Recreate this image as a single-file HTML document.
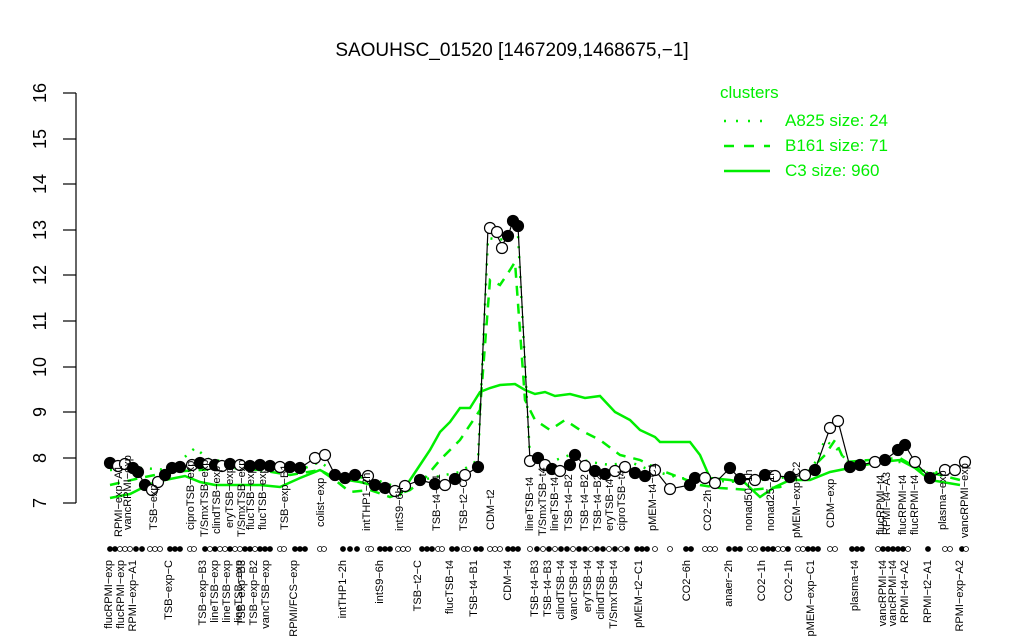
<!DOCTYPE html>
<html><head><meta charset="utf-8"><style>
html,body{margin:0;padding:0;background:#fff;}
svg{display:block;font-family:"Liberation Sans",sans-serif;}
</style></head><body>
<svg width="1024" height="640" viewBox="0 0 1024 640" xmlns="http://www.w3.org/2000/svg">
<rect width="1024" height="640" fill="#fff"/>
<text x="512" y="56" font-size="19" text-anchor="middle">SAOUHSC_01520 [1467209,1468675,−1]</text>
<g stroke="#000" stroke-width="1.2">
<line x1="76" y1="93" x2="76" y2="503"/>
<line x1="63" y1="93" x2="76" y2="93"/><line x1="63" y1="139" x2="76" y2="139"/><line x1="63" y1="184" x2="76" y2="184"/><line x1="63" y1="230" x2="76" y2="230"/><line x1="63" y1="275" x2="76" y2="275"/><line x1="63" y1="321" x2="76" y2="321"/><line x1="63" y1="367" x2="76" y2="367"/><line x1="63" y1="412" x2="76" y2="412"/><line x1="63" y1="458" x2="76" y2="458"/><line x1="63" y1="503" x2="76" y2="503"/>
</g>
<g font-size="18" text-anchor="middle">
<text transform="translate(46,93) rotate(-90)">16</text><text transform="translate(46,139) rotate(-90)">15</text><text transform="translate(46,184) rotate(-90)">14</text><text transform="translate(46,230) rotate(-90)">13</text><text transform="translate(46,275) rotate(-90)">12</text><text transform="translate(46,321) rotate(-90)">11</text><text transform="translate(46,367) rotate(-90)">10</text><text transform="translate(46,412) rotate(-90)">9</text><text transform="translate(46,458) rotate(-90)">8</text><text transform="translate(46,503) rotate(-90)">7</text>
</g>
<g fill="#00ee00" font-size="17">
<text x="720" y="98">clusters</text>
<text x="785" y="126">A825 size: 24</text>
<text x="785" y="151">B161 size: 71</text>
<text x="785" y="176">C3 size: 960</text>
</g>
<g stroke="#00ee00" stroke-width="2.5">
<line x1="724" y1="121" x2="770" y2="121" stroke-dasharray="2,10"/>
<line x1="724" y1="146" x2="770" y2="146" stroke-dasharray="10,10"/>
<line x1="724" y1="171" x2="770" y2="171"/>
</g>
<polyline fill="none" stroke="#00ee00" stroke-width="2.5" points="110,498 130,494 150,484 165,480 185,476 200,482 215,485 240,485 260,485 280,487 300,478 320,470 335,478 360,482 380,487 400,495 410,480 420,465 430,450 440,432 450,422 460,408 470,408 480,392 490,388 500,385 515,384 525,390 535,394 545,392 555,396 570,394 585,398 600,396 615,412 630,420 640,430 655,437 660,442 670,442 690,442 700,455 710,478 730,480 745,483 760,497 775,487 790,480 810,480 830,472 850,468 880,462 900,460 915,468 930,480 960,485"/>
<polyline fill="none" stroke="#00ee00" stroke-width="2.5" stroke-dasharray="10,8" points="110,485 140,478 170,472 200,470 230,468 260,470 290,475 320,470 335,480 350,492 370,490 390,497 410,490 425,478 440,460 460,440 480,410 490,280 500,285 510,270 515,262 525,400 535,420 550,430 565,420 580,430 600,440 620,455 640,460 660,470 700,485 720,488 750,490 780,487 810,470 825,455 835,440 845,462 870,460 900,458 920,470 960,480"/>
<polyline fill="none" stroke="#00ee00" stroke-width="2.5" stroke-dasharray="2,8" points="110,470 140,468 170,470 195,448 210,460 240,462 270,462 300,470 320,462 340,476 370,478 400,488 430,478 460,472 478,460 488,238 500,240 510,235 518,235 530,458 550,462 570,455 590,462 610,465 630,462 650,470 680,478 700,480 740,482 780,478 810,474 825,440 838,450 850,465 880,462 905,462 930,474 960,466"/>
<polyline fill="none" stroke="#000" stroke-width="1.2" points="110,463 118,466 125,464 133,468 138,472 145,485 152,490 158,482 165,475 172,468 180,467 192,465 200,463 208,464 215,465 222,466 230,464 240,465 250,466 260,465 270,466 280,467 290,467 300,468 315,458 325,455 335,475 345,478 355,475 368,476 375,485 385,488 395,491 405,486 420,480 435,484 445,485 455,479 465,475 478,467 488,228 495,232 502,245 508,236 513,221 518,226 530,461 538,458 545,465 552,469 560,471 570,465 575,455 585,466 595,471 605,474 615,471 625,467 635,473 645,476 655,470 670,489 690,485 695,478 705,478 715,483 730,468 740,479 755,480 765,475 775,476 790,477 805,475 815,470 830,428 838,421 850,467 860,465 875,462 885,460 898,450 905,445 915,462 930,478 945,470 955,470 965,462"/>
<g stroke="#000" stroke-width="1.2" fill="#000">
<circle cx="110" cy="463" r="5.5"/><circle cx="118" cy="466" r="5.5" fill="#fff"/><circle cx="125" cy="464" r="5.5" fill="#fff"/><circle cx="133" cy="468" r="5.5"/><circle cx="138" cy="472" r="5.5"/><circle cx="145" cy="485" r="5.5"/><circle cx="152" cy="490" r="5.5" fill="#fff"/><circle cx="158" cy="482" r="5.5" fill="#fff"/><circle cx="165" cy="475" r="5.5"/><circle cx="172" cy="468" r="5.5"/><circle cx="180" cy="467" r="5.5"/><circle cx="192" cy="465" r="5.5" fill="#fff"/><circle cx="200" cy="463" r="5.5"/><circle cx="208" cy="464" r="5.5" fill="#fff"/><circle cx="215" cy="465" r="5.5"/><circle cx="222" cy="466" r="5.5" fill="#fff"/><circle cx="230" cy="464" r="5.5"/><circle cx="240" cy="465" r="5.5" fill="#fff"/><circle cx="250" cy="466" r="5.5"/><circle cx="260" cy="465" r="5.5"/><circle cx="270" cy="466" r="5.5"/><circle cx="280" cy="467" r="5.5" fill="#fff"/><circle cx="290" cy="467" r="5.5"/><circle cx="300" cy="468" r="5.5"/><circle cx="315" cy="458" r="5.5" fill="#fff"/><circle cx="325" cy="455" r="5.5" fill="#fff"/><circle cx="335" cy="475" r="5.5"/><circle cx="345" cy="478" r="5.5"/><circle cx="355" cy="475" r="5.5"/><circle cx="368" cy="476" r="5.5" fill="#fff"/><circle cx="375" cy="485" r="5.5"/><circle cx="385" cy="488" r="5.5"/><circle cx="395" cy="491" r="5.5" fill="#fff"/><circle cx="405" cy="486" r="5.5" fill="#fff"/><circle cx="420" cy="480" r="5.5"/><circle cx="435" cy="484" r="5.5"/><circle cx="445" cy="485" r="5.5" fill="#fff"/><circle cx="455" cy="479" r="5.5"/><circle cx="465" cy="475" r="5.5" fill="#fff"/><circle cx="478" cy="467" r="5.5"/><circle cx="490" cy="228" r="5.5" fill="#fff"/><circle cx="497" cy="232" r="5.5" fill="#fff"/><circle cx="502" cy="248" r="5.5" fill="#fff"/><circle cx="508" cy="236" r="5.5"/><circle cx="513" cy="221" r="5.5"/><circle cx="518" cy="226" r="5.5"/><circle cx="530" cy="461" r="5.5" fill="#fff"/><circle cx="538" cy="458" r="5.5"/><circle cx="545" cy="465" r="5.5" fill="#fff"/><circle cx="552" cy="469" r="5.5"/><circle cx="560" cy="471" r="5.5" fill="#fff"/><circle cx="570" cy="465" r="5.5"/><circle cx="575" cy="455" r="5.5"/><circle cx="585" cy="466" r="5.5" fill="#fff"/><circle cx="595" cy="471" r="5.5"/><circle cx="605" cy="474" r="5.5"/><circle cx="615" cy="471" r="5.5" fill="#fff"/><circle cx="625" cy="467" r="5.5" fill="#fff"/><circle cx="635" cy="473" r="5.5"/><circle cx="645" cy="476" r="5.5"/><circle cx="655" cy="470" r="5.5" fill="#fff"/><circle cx="670" cy="489" r="5.5" fill="#fff"/><circle cx="690" cy="485" r="5.5"/><circle cx="695" cy="478" r="5.5"/><circle cx="705" cy="478" r="5.5" fill="#fff"/><circle cx="715" cy="483" r="5.5" fill="#fff"/><circle cx="730" cy="468" r="5.5"/><circle cx="740" cy="479" r="5.5"/><circle cx="755" cy="480" r="5.5" fill="#fff"/><circle cx="765" cy="475" r="5.5"/><circle cx="775" cy="476" r="5.5" fill="#fff"/><circle cx="790" cy="477" r="5.5"/><circle cx="805" cy="475" r="5.5" fill="#fff"/><circle cx="815" cy="470" r="5.5"/><circle cx="830" cy="428" r="5.5" fill="#fff"/><circle cx="838" cy="421" r="5.5" fill="#fff"/><circle cx="850" cy="467" r="5.5"/><circle cx="860" cy="465" r="5.5"/><circle cx="875" cy="462" r="5.5" fill="#fff"/><circle cx="885" cy="460" r="5.5"/><circle cx="898" cy="450" r="5.5"/><circle cx="905" cy="445" r="5.5"/><circle cx="915" cy="462" r="5.5" fill="#fff"/><circle cx="930" cy="478" r="5.5"/><circle cx="945" cy="470" r="5.5" fill="#fff"/><circle cx="955" cy="470" r="5.5" fill="#fff"/><circle cx="965" cy="462" r="5.5" fill="#fff"/>
</g>
<g stroke="#000" stroke-width="0.8" fill="#000">
<circle cx="110" cy="549" r="2.5"/><circle cx="115" cy="549" r="2.5"/><circle cx="120" cy="549" r="2.5" fill="#fff"/><circle cx="125" cy="549" r="2.5" fill="#fff"/><circle cx="130" cy="549" r="2.5" fill="#fff"/><circle cx="136" cy="549" r="2.5"/><circle cx="142" cy="549" r="2.5"/><circle cx="150" cy="549" r="2.5" fill="#fff"/><circle cx="155" cy="549" r="2.5" fill="#fff"/><circle cx="160" cy="549" r="2.5" fill="#fff"/><circle cx="170" cy="549" r="2.5"/><circle cx="175" cy="549" r="2.5"/><circle cx="180" cy="549" r="2.5"/><circle cx="190" cy="549" r="2.5" fill="#fff"/><circle cx="194" cy="549" r="2.5" fill="#fff"/><circle cx="205" cy="549" r="2.5"/><circle cx="210" cy="549" r="2.5" fill="#fff"/><circle cx="215" cy="549" r="2.5"/><circle cx="220" cy="549" r="2.5" fill="#fff"/><circle cx="225" cy="549" r="2.5" fill="#fff"/><circle cx="230" cy="549" r="2.5"/><circle cx="235" cy="549" r="2.5" fill="#fff"/><circle cx="240" cy="549" r="2.5" fill="#fff"/><circle cx="245" cy="549" r="2.5"/><circle cx="250" cy="549" r="2.5"/><circle cx="255" cy="549" r="2.5" fill="#fff"/><circle cx="260" cy="549" r="2.5"/><circle cx="265" cy="549" r="2.5"/><circle cx="270" cy="549" r="2.5"/><circle cx="280" cy="549" r="2.5" fill="#fff"/><circle cx="284" cy="549" r="2.5" fill="#fff"/><circle cx="295" cy="549" r="2.5"/><circle cx="300" cy="549" r="2.5"/><circle cx="305" cy="549" r="2.5"/><circle cx="320" cy="549" r="2.5" fill="#fff"/><circle cx="324" cy="549" r="2.5" fill="#fff"/><circle cx="343" cy="549" r="2.5"/><circle cx="350" cy="549" r="2.5"/><circle cx="357" cy="549" r="2.5"/><circle cx="368" cy="549" r="2.5" fill="#fff"/><circle cx="371" cy="549" r="2.5" fill="#fff"/><circle cx="380" cy="549" r="2.5"/><circle cx="385" cy="549" r="2.5"/><circle cx="390" cy="549" r="2.5"/><circle cx="398" cy="549" r="2.5" fill="#fff"/><circle cx="403" cy="549" r="2.5" fill="#fff"/><circle cx="408" cy="549" r="2.5" fill="#fff"/><circle cx="422" cy="549" r="2.5"/><circle cx="427" cy="549" r="2.5"/><circle cx="432" cy="549" r="2.5"/><circle cx="438" cy="549" r="2.5" fill="#fff"/><circle cx="442" cy="549" r="2.5" fill="#fff"/><circle cx="452" cy="549" r="2.5"/><circle cx="457" cy="549" r="2.5"/><circle cx="464" cy="549" r="2.5" fill="#fff"/><circle cx="468" cy="549" r="2.5" fill="#fff"/><circle cx="476" cy="549" r="2.5"/><circle cx="481" cy="549" r="2.5"/><circle cx="490" cy="549" r="2.5" fill="#fff"/><circle cx="495" cy="549" r="2.5" fill="#fff"/><circle cx="500" cy="549" r="2.5" fill="#fff"/><circle cx="508" cy="549" r="2.5"/><circle cx="513" cy="549" r="2.5"/><circle cx="518" cy="549" r="2.5"/><circle cx="530" cy="549" r="2.5" fill="#fff"/><circle cx="537" cy="549" r="2.5"/><circle cx="543" cy="549" r="2.5" fill="#fff"/><circle cx="549" cy="549" r="2.5"/><circle cx="555" cy="549" r="2.5" fill="#fff"/><circle cx="561" cy="549" r="2.5"/><circle cx="567" cy="549" r="2.5"/><circle cx="573" cy="549" r="2.5" fill="#fff"/><circle cx="579" cy="549" r="2.5"/><circle cx="585" cy="549" r="2.5"/><circle cx="591" cy="549" r="2.5" fill="#fff"/><circle cx="597" cy="549" r="2.5"/><circle cx="603" cy="549" r="2.5"/><circle cx="609" cy="549" r="2.5" fill="#fff"/><circle cx="615" cy="549" r="2.5"/><circle cx="621" cy="549" r="2.5" fill="#fff"/><circle cx="627" cy="549" r="2.5"/><circle cx="637" cy="549" r="2.5"/><circle cx="642" cy="549" r="2.5"/><circle cx="647" cy="549" r="2.5"/><circle cx="655" cy="549" r="2.5" fill="#fff"/><circle cx="670" cy="549" r="2.5" fill="#fff"/><circle cx="686" cy="549" r="2.5"/><circle cx="691" cy="549" r="2.5"/><circle cx="705" cy="549" r="2.5" fill="#fff"/><circle cx="710" cy="549" r="2.5" fill="#fff"/><circle cx="715" cy="549" r="2.5" fill="#fff"/><circle cx="729" cy="549" r="2.5"/><circle cx="735" cy="549" r="2.5"/><circle cx="740" cy="549" r="2.5"/><circle cx="750" cy="549" r="2.5" fill="#fff"/><circle cx="755" cy="549" r="2.5" fill="#fff"/><circle cx="763" cy="549" r="2.5"/><circle cx="768" cy="549" r="2.5"/><circle cx="773" cy="549" r="2.5"/><circle cx="778" cy="549" r="2.5" fill="#fff"/><circle cx="783" cy="549" r="2.5" fill="#fff"/><circle cx="788" cy="549" r="2.5"/><circle cx="798" cy="549" r="2.5" fill="#fff"/><circle cx="803" cy="549" r="2.5" fill="#fff"/><circle cx="808" cy="549" r="2.5"/><circle cx="813" cy="549" r="2.5"/><circle cx="818" cy="549" r="2.5"/><circle cx="830" cy="549" r="2.5" fill="#fff"/><circle cx="835" cy="549" r="2.5" fill="#fff"/><circle cx="852" cy="549" r="2.5"/><circle cx="857" cy="549" r="2.5"/><circle cx="862" cy="549" r="2.5"/><circle cx="878" cy="549" r="2.5" fill="#fff"/><circle cx="883" cy="549" r="2.5"/><circle cx="888" cy="549" r="2.5"/><circle cx="893" cy="549" r="2.5"/><circle cx="898" cy="549" r="2.5"/><circle cx="903" cy="549" r="2.5"/><circle cx="908" cy="549" r="2.5" fill="#fff"/><circle cx="928" cy="549" r="2.5"/><circle cx="945" cy="549" r="2.5" fill="#fff"/><circle cx="950" cy="549" r="2.5" fill="#fff"/><circle cx="962" cy="549" r="2.5"/><circle cx="966" cy="549" r="2.5" fill="#fff"/>
</g>
<g font-size="11" text-anchor="start">
<text transform="translate(122,537) rotate(-90)">RPMI−exp−A1</text>
<text transform="translate(131,530) rotate(-90)">vancRPMI−exp</text>
<text transform="translate(157,530) rotate(-90)">TSB−exp</text>
<text transform="translate(194,530) rotate(-90)">ciproTSB−exp</text>
<text transform="translate(208,537) rotate(-90)">T/SmxTSB−exp</text>
<text transform="translate(220,534) rotate(-90)">clindTSB−exp</text>
<text transform="translate(233,528) rotate(-90)">eryTSB−exp</text>
<text transform="translate(245,537) rotate(-90)">T/SmxTSB−exp</text>
<text transform="translate(254,530) rotate(-90)">flucTSB−exp</text>
<text transform="translate(266,530) rotate(-90)">flucTSB−exp</text>
<text transform="translate(288,530) rotate(-90)">TSB−exp−B1</text>
<text transform="translate(324,527) rotate(-90)">colist−exp</text>
<text transform="translate(370,531) rotate(-90)">intTHP1−2h</text>
<text transform="translate(403,531) rotate(-90)">intS9−6h</text>
<text transform="translate(440,531) rotate(-90)">TSB−t4−B1</text>
<text transform="translate(467,531) rotate(-90)">TSB−t2−C</text>
<text transform="translate(494,530) rotate(-90)">CDM−t2</text>
<text transform="translate(533,531) rotate(-90)">lineTSB−t4</text>
<text transform="translate(546,536) rotate(-90)">T/SmxTSB−t4</text>
<text transform="translate(558,531) rotate(-90)">lineTSB−t4</text>
<text transform="translate(572,531) rotate(-90)">TSB−t4−B2</text>
<text transform="translate(588,531) rotate(-90)">TSB−t4−B2</text>
<text transform="translate(601,531) rotate(-90)">TSB−t4−B2</text>
<text transform="translate(613,531) rotate(-90)">eryTSB−t4</text>
<text transform="translate(625,531) rotate(-90)">ciproTSB−t4</text>
<text transform="translate(656,531) rotate(-90)">pMEM−t4−C1</text>
<text transform="translate(711,531) rotate(-90)">CO2−2h</text>
<text transform="translate(752,531) rotate(-90)">nonad50−1h</text>
<text transform="translate(774,531) rotate(-90)">nonad25−1h</text>
<text transform="translate(800,538) rotate(-90)">pMEM−exp−C2</text>
<text transform="translate(834,528) rotate(-90)">CDM−exp</text>
<text transform="translate(884,535) rotate(-90)">flucRPMI−t4</text>
<text transform="translate(890,535) rotate(-90)">RPMI−t4−A3</text>
<text transform="translate(906,535) rotate(-90)">flucRPMI−t4</text>
<text transform="translate(918,535) rotate(-90)">flucRPMI−t4</text>
<text transform="translate(946,530) rotate(-90)">plasma−exp</text>
<text transform="translate(968,538) rotate(-90)">vancRPMI−exp</text>
</g>
<g font-size="11" text-anchor="end">
<text transform="translate(112,560) rotate(-90)">flucRPMI−exp</text>
<text transform="translate(124,560) rotate(-90)">flucRPMI−exp</text>
<text transform="translate(136,560) rotate(-90)">RPMI−exp−A1</text>
<text transform="translate(172,560) rotate(-90)">TSB−exp−C</text>
<text transform="translate(206,560) rotate(-90)">TSB−exp−B3</text>
<text transform="translate(218,560) rotate(-90)">lineTSB−exp</text>
<text transform="translate(230,560) rotate(-90)">lineTSB−exp</text>
<text transform="translate(242,560) rotate(-90)">lineTSB−exp</text>
<text transform="translate(245,560) rotate(-90)">TSB−exp−B3</text>
<text transform="translate(257,560) rotate(-90)">TSB−exp−B2</text>
<text transform="translate(269,560) rotate(-90)">vancTSB−exp</text>
<text transform="translate(297,560) rotate(-90)">RPMI/FCS−exp</text>
<text transform="translate(346,560) rotate(-90)">intTHP1−2h</text>
<text transform="translate(383,560) rotate(-90)">intS9−6h</text>
<text transform="translate(421,560) rotate(-90)">TSB−t2−C</text>
<text transform="translate(453,560) rotate(-90)">flucTSB−t4</text>
<text transform="translate(477,560) rotate(-90)">TSB−t4−B1</text>
<text transform="translate(511,560) rotate(-90)">CDM−t4</text>
<text transform="translate(538,560) rotate(-90)">TSB−t4−B3</text>
<text transform="translate(551,560) rotate(-90)">TSB−t4−B3</text>
<text transform="translate(564,560) rotate(-90)">clindTSB−t4</text>
<text transform="translate(577,560) rotate(-90)">vancTSB−t4</text>
<text transform="translate(591,560) rotate(-90)">eryTSB−t4</text>
<text transform="translate(604,560) rotate(-90)">clindTSB−t4</text>
<text transform="translate(617,560) rotate(-90)">T/SmxTSB−t4</text>
<text transform="translate(642,560) rotate(-90)">pMEM−t2−C1</text>
<text transform="translate(690,560) rotate(-90)">CO2−6h</text>
<text transform="translate(732,560) rotate(-90)">anaer−2h</text>
<text transform="translate(765,560) rotate(-90)">CO2−1h</text>
<text transform="translate(792,560) rotate(-90)">CO2−1h</text>
<text transform="translate(814,560) rotate(-90)">pMEM−exp−C1</text>
<text transform="translate(858,560) rotate(-90)">plasma−t4</text>
<text transform="translate(886,560) rotate(-90)">vancRPMI−t4</text>
<text transform="translate(896,560) rotate(-90)">vancRPMI−t4</text>
<text transform="translate(908,560) rotate(-90)">RPMI−t4−A2</text>
<text transform="translate(931,560) rotate(-90)">RPMI−t2−A1</text>
<text transform="translate(963,560) rotate(-90)">RPMI−exp−A2</text>
</g>
</svg>
</body></html>
